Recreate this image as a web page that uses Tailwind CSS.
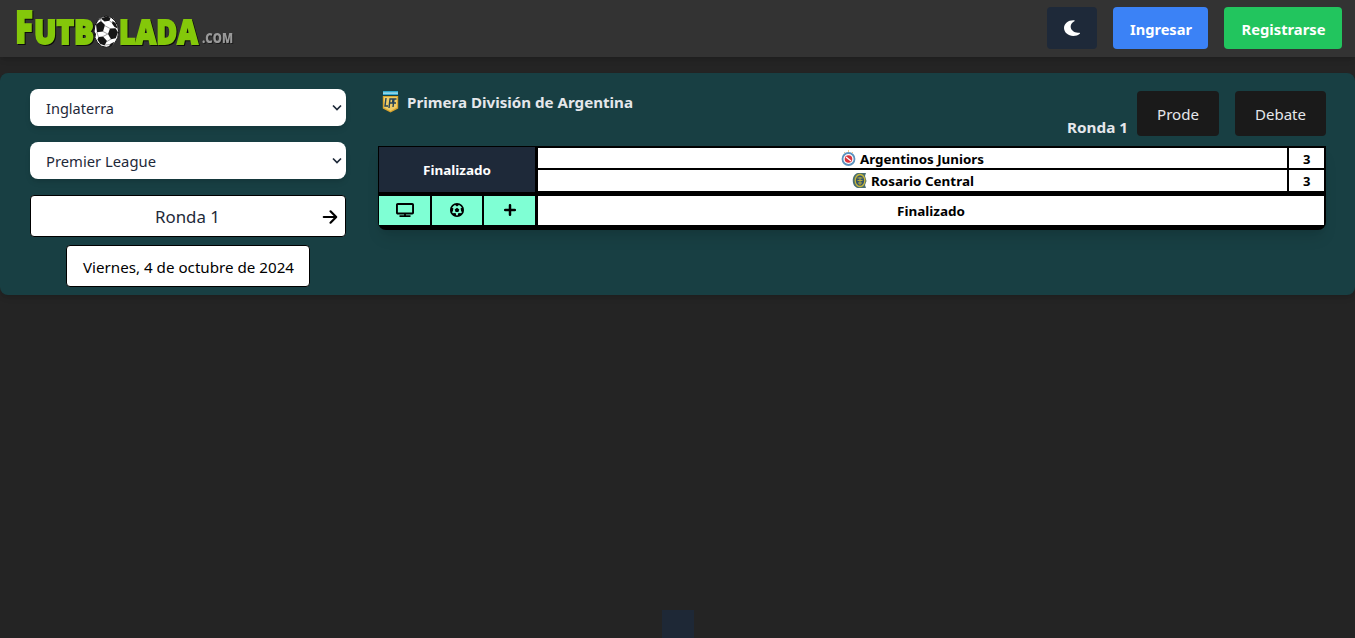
<!DOCTYPE html>
<html lang="es">
<head>
<meta charset="utf-8">
<title>Futbolada.com</title>
<script src="https://cdn.jsdelivr.net/npm/@tailwindcss/browser@4"></script>
</head>
<body class="relative h-[638px] overflow-hidden bg-[#242424] font-['Noto_Sans','Open_Sans',sans-serif] text-base">
<header class="flex h-[57px] items-start justify-between bg-[#333] pr-[13px] pt-[7px] shadow-md">
  <svg class="-mt-[7px] h-[57px] w-[250px]" viewBox="0 0 250 57" font-family="Open Sans, sans-serif" font-weight="800">
    <g class="drop-shadow-[1.5px_1.5px_0.5px_#0c0c0c]" fill="#84c80a" stroke="#84c80a" stroke-width="1.800">
      <text x="15" y="43" font-size="45" textLength="18" lengthAdjust="spacingAndGlyphs">F</text>
      <text x="34" y="43.500" font-size="34" textLength="60" lengthAdjust="spacingAndGlyphs">UTB</text>
      <text x="119" y="43.500" font-size="34" textLength="79" lengthAdjust="spacingAndGlyphs">LADA</text>
    </g>
    <text class="drop-shadow-[1px_1px_0_#1c1c1c]" x="202" y="43" font-size="14" fill="#999" textLength="31" lengthAdjust="spacingAndGlyphs">.COM</text>
    <ellipse cx="106.300" cy="31.700" rx="12.300" ry="15.600" fill="#fff" stroke="#111" stroke-width="1"/>
    <g fill="#161616">
      <path d="M101 18.500l6-2.300 3.500 1.800-1 2.800-5 .7z"/>
      <path d="M96 24.500l5-3.500 4 4-2 6.500-6 .8z"/>
      <path d="M112.500 21l3 2 2.300 5.500-3.300-1.500-2.500-3.500z"/>
      <path d="M110 28.500l5.500-.2 2.500 4-2.300 6-4.700 1-3-5.300z"/>
      <path d="M98.500 37l4.500-.5 4 4.500-2.500 4.500-4.500-1.700-2.500-4z"/>
      <path d="M94.200 31l1.800 3-.6 3.500-1.200-3z"/>
      <path d="M110.500 43.700l4-2-2.500 4-3.500 1.300z"/>
    </g>
    <path d="M104.500 25.500l5.500 3M103 31.500l4.800 2.500-4.800 2.500M96.800 32l1.700 5M109.500 21l3 2M111 39l-4 2.500M101 21l-.5-2.500M105 45l5-.5" stroke="#777" stroke-width=".7" fill="none"/>
  </svg>
  <nav class="flex gap-4 font-bold text-white">
    <button class="flex h-[42px] w-[50px] items-center justify-center rounded bg-gray-800"><svg class="h-[18px] w-[16px]" viewBox="0 0 384 512" preserveAspectRatio="none" fill="currentColor"><path d="M223.500 32C100 32 0 132.300 0 256s100 224 223.500 224c60.600 0 115.500-24.200 155.800-63.400 5-4.900 6.300-12.500 3.100-18.700s-10.100-9.700-17-8.500c-9.800 1.700-19.800 2.600-30.100 2.600-96.900 0-175.500-78.800-175.500-176 0-65.800 36-123.100 89.300-153.300 6.100-3.500 9.200-10.500 7.700-17.300s-7.300-11.900-14.300-12.500c-6.300-.5-12.600-.8-19-.8z"/></svg></button>
    <button class="flex h-[42px] w-[95px] items-center justify-center rounded bg-[#3b82f6] pt-[3px]"><svg class="h-6 w-[62px] overflow-visible" fill="currentColor"><text x="0" y="17" font-size="15" textLength="62" lengthAdjust="spacingAndGlyphs">Ingresar</text></svg></button>
    <button class="flex h-[42px] w-[118px] items-center justify-center rounded bg-[#22c55e] pt-[3px]"><svg class="h-6 w-[84px] overflow-visible" fill="currentColor"><text x="0.500" y="17" font-size="15" textLength="84" lengthAdjust="spacingAndGlyphs">Registrarse</text></svg></button>
  </nav>
</header>

<main class="mt-4 flex h-[222px] rounded-lg bg-[#183f43] pl-[30px] pr-[29px] pt-4 shadow-md">
  <aside class="flex w-[316px] flex-col">
    <div class="flex h-[37px] items-center justify-between rounded-lg bg-white pl-4 pr-1 text-gray-800 shadow-md">
      <svg class="h-6 w-[68px] overflow-visible" fill="currentColor"><text x="0" y="18" font-size="15" textLength="68" lengthAdjust="spacingAndGlyphs">Inglaterra</text></svg>
      <svg class="h-[10px] w-[10px]" viewBox="0 0 10 10" fill="none" stroke="currentColor" stroke-width="1.700"><path d="M1 2.500l4 4 4-4"/></svg>
    </div>
    <div class="mt-4 flex h-[37px] items-center justify-between rounded-lg bg-white pl-4 pr-1 text-gray-800 shadow-md">
      <svg class="h-6 w-[110px] overflow-visible" fill="currentColor"><text x="0" y="18" font-size="15" textLength="110" lengthAdjust="spacingAndGlyphs">Premier League</text></svg>
      <svg class="h-[10px] w-[10px]" viewBox="0 0 10 10" fill="none" stroke="currentColor" stroke-width="1.700"><path d="M1 2.500l4 4 4-4"/></svg>
    </div>
    <div class="mt-4 flex h-[42px] items-center justify-between rounded border border-black bg-white pl-[124px] pr-2">
      <svg class="h-6 w-[65px] overflow-visible text-gray-800" fill="currentColor"><text x="0" y="19" font-size="17" textLength="65" lengthAdjust="spacingAndGlyphs">Ronda 1</text></svg>
      <svg class="h-[14px] w-[14px] translate-y-px overflow-visible" viewBox="0 0 14 14" fill="none" stroke="#000" stroke-width="2.200" stroke-linecap="round" stroke-linejoin="round"><path d="M.8 7h12M7.500 1.300L13.200 7l-5.700 5.700"/></svg>
    </div>
    <div class="mt-2 flex h-[42px] w-[244px] items-center justify-center self-center rounded border border-black bg-white">
      <svg class="h-6 w-[211px] overflow-visible"><text x="0" y="19" font-size="15" textLength="211" lengthAdjust="spacingAndGlyphs">Viernes, 4 de octubre de 2024</text></svg>
    </div>
  </aside>

  <section class="ml-8 flex w-[948px] flex-col">
    <div class="flex h-[57px] justify-between text-gray-200">
      <div class="flex h-[26px] items-center gap-2 pl-1 font-bold">
        <svg class="h-[22px] w-[17px]" viewBox="0 0 17 22"><path d="M1 0h15v4H1z" fill="#30a9d0"/><path d="M1 1.500h15v1.200H1z" fill="#bce6f0"/><path d="M.8 5h15.400v12.500L8.500 21.500l-7.700-4z" fill="#d9a52e"/><path d="M2 6h13v10.500L8.500 20 2 16.500z" fill="#edcb66"/><path d="M4 7l-1 8h3M7 17l1-9h3l-.5 4H8M11 16l1-8h2.500M11.500 12h2.500" fill="none" stroke="#254257" stroke-width="1.400"/></svg>
        <svg class="h-6 w-[226px] overflow-visible" fill="currentColor"><text x="0" y="18" font-size="15" textLength="226" lengthAdjust="spacingAndGlyphs">Primera División de Argentina</text></svg>
      </div>
      <div class="flex items-start pt-[2px]">
        <svg class="mr-[9px] mt-[24px] h-6 w-[61px] overflow-visible font-bold" fill="currentColor"><text x="0" y="18" font-size="15" textLength="61" lengthAdjust="spacingAndGlyphs">Ronda 1</text></svg>
        <button class="mr-4 flex h-[45px] w-[82px] items-center justify-center rounded bg-[#1a1a1a]"><svg class="h-6 w-[42px] overflow-visible" fill="currentColor"><text x="0" y="18" font-size="15" textLength="42" lengthAdjust="spacingAndGlyphs">Prode</text></svg></button>
        <button class="flex h-[45px] w-[91px] items-center justify-center rounded bg-[#1a1a1a]"><svg class="h-6 w-[51px] overflow-visible" fill="currentColor"><text x="0" y="18" font-size="15" textLength="51" lengthAdjust="spacingAndGlyphs">Debate</text></svg></button>
      </div>
    </div>
    <div class="h-[84px] overflow-hidden rounded-b-lg bg-black text-[14px] font-bold shadow-lg">
      <div class="flex h-[50px] pl-px pr-[2px]">
        <div class="mr-[3px] mt-px flex h-[45px] w-[156px] items-center justify-center bg-gray-800 text-white"><svg class="h-5 w-[68px] overflow-visible" fill="currentColor"><text x="0" y="15" font-size="13" textLength="68" lengthAdjust="spacingAndGlyphs">Finalizado</text></svg></div>
        <div class="mt-[2px] grid h-[43px] flex-1 grid-cols-[1fr_35px] grid-rows-[20px_21px] gap-[2px]">
          <div class="flex items-center justify-center gap-1 bg-white">
            <svg class="h-4 w-[15px]" viewBox="0 0 15 16"><path d="M3 2l1 1M7.500 0v2M12 2l-1 1" stroke="#eac68c"/><circle cx="7.500" cy="9" r="6" fill="#fff" stroke="#5a91be" stroke-width="1.800"/><circle cx="7.500" cy="9" r="3.800" fill="#d8333d"/><path d="M5 7l5 4" stroke="#fff" stroke-width="1.300"/></svg>
            <svg class="h-5 w-[124px] overflow-visible"><text x="0" y="16" font-size="13" textLength="124" lengthAdjust="spacingAndGlyphs">Argentinos Juniors</text></svg>
          </div>
          <div class="flex items-center justify-center bg-white"><svg class="h-5 w-2 overflow-visible"><text x="0" y="16" font-size="13">3</text></svg></div>
          <div class="flex items-center justify-center gap-1 bg-white">
            <svg class="h-4 w-[15px]" viewBox="0 0 15 16"><path d="M6 0h8l-1 3 1.500 5L13 12l1 3H6C-1 14-1 1 6 0z" fill="#4b6f70"/><ellipse cx="8" cy="7.500" rx="4.800" ry="6" fill="#34556b" stroke="#c9b83a" stroke-width="1.300"/><path d="M5.500 5h5M5.500 7.500h5M6 10h4M8 4v8" stroke="#b9ac3b"/></svg>
            <svg class="h-5 w-[103px] overflow-visible"><text x="0" y="15" font-size="13" textLength="103" lengthAdjust="spacingAndGlyphs">Rosario Central</text></svg>
          </div>
          <div class="flex items-center justify-center bg-white"><svg class="h-5 w-2 overflow-visible"><text x="0" y="15" font-size="13">3</text></svg></div>
        </div>
      </div>
      <div class="flex h-[29px] pl-px pr-[2px]">
        <div class="mr-[3px] flex w-[156px] gap-[2px]">
          <div class="flex w-[51px] items-center justify-center bg-[#7fffd4]"><svg class="h-[14px] w-[18px] -translate-y-px" viewBox="0 0 18 14" fill="none" stroke="#000" stroke-width="1.900"><rect x=".95" y=".95" width="16.100" height="9.600" rx=".8"/><path d="M9 10.500v2.500M3.500 13.100h11" stroke-width="1.800"/></svg></div>
          <div class="flex w-[50px] items-center justify-center bg-[#7fffd4]"><svg class="h-[14px] w-[14px] -translate-y-px" viewBox="0 0 14 14"><circle cx="7" cy="7" r="6.200" fill="none" stroke="#000" stroke-width="1.600"/><path d="M7 4.800l2.300 1.700-.9 2.600h-2.800l-.9-2.600zM3.800 1h6.400L7 3.400zM.6 4.500L3.400 5.300 2.800 8.600.7 9.500zM13.400 4.500l-2.800.8.600 3.300 2.100.9zM2.600 10.300l3-.3.900 3.300-3-.6zM11.400 10.300l-3-.3-.9 3.300 3-.6z"/></svg></div>
          <div class="flex w-[51px] items-center justify-center bg-[#7fffd4]"><svg class="h-3 w-3 -translate-y-px" viewBox="0 0 12 12" stroke="#000" stroke-width="2.500" stroke-linecap="round"><path d="M6 1.200v9.600M1.200 6h9.600"/></svg></div>
        </div>
        <div class="flex flex-1 items-center justify-center bg-white"><svg class="h-5 w-[68px] overflow-visible"><text x="0" y="15" font-size="13" textLength="68" lengthAdjust="spacingAndGlyphs">Finalizado</text></svg></div>
      </div>
    </div>
  </section>
</main>
<div class="absolute bottom-0 left-[662px] h-7 w-8 bg-gray-800/90"></div>
</body>
</html>
